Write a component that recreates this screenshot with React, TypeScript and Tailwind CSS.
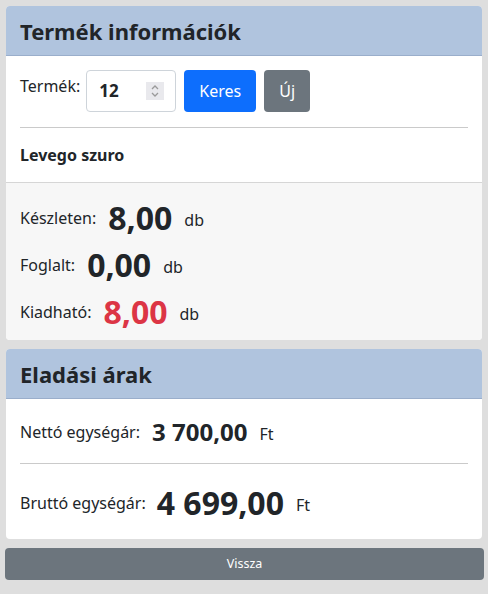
export default function App() {
  return (
    <div
      className="min-h-[594px] bg-[#dedede] pt-[6px] text-[#212529]"
      style={{ fontFamily: '"Noto Sans", "Open Sans", sans-serif' }}
    >
      {/* Termék információk */}
      <div className="mx-[6px] overflow-hidden rounded-[4px] bg-white">
        <div className="flex h-[50px] items-center border-b border-[#9aaecb] bg-[#b0c4de] px-[14px]">
          <h4 className="text-[22px] font-bold leading-none">Termék információk</h4>
        </div>
        <div className="px-[14px]">
          <div className="flex items-start gap-[8px] pt-[14px] pb-[15px]">
            <label className="mt-[4px] mr-[-2px] text-[16px]">Termék:</label>
            <div className="flex h-[42px] w-[90px] items-center justify-between rounded-[4px] border border-[#ced4da] bg-white pl-[12px] pr-[11px]">
              <span className="text-[17px] font-bold">12</span>
              <span className="flex h-[18px] w-[18px] flex-col items-center justify-center bg-[#e9e9ed]">
                <svg width="10" height="14" viewBox="0 0 10 14" fill="none" stroke="#9a9a9a" strokeWidth="1.3">
                  <path d="M2 5 L5 2 L8 5" />
                  <path d="M2 9 L5 12 L8 9" />
                </svg>
              </span>
            </div>
            <button className="h-[42px] w-[72px] rounded-[4px] bg-[#0d6efd] text-[16px] text-white">Keres</button>
            <button className="h-[42px] w-[46px] rounded-[4px] bg-[#6c757d] text-[16px] text-white">Új</button>
          </div>
          <div className="border-t border-[#cacaca]" />
          <div className="flex h-[54px] items-center">
            <span className="text-[16px] font-bold">Levego szuro</span>
          </div>
        </div>
        <div className="flex flex-col border-t border-[#d6d6d6] bg-[#f7f7f7] px-[14px] pt-[11px] pb-[5px]">
          <div className="flex h-[47px] items-center">
            <span className="text-[16px]">Készleten:</span>
            <span className="ml-[12px] text-[32px] font-bold">8,00</span>
            <span className="ml-[12px] mt-[4px] text-[16px]">db</span>
          </div>
          <div className="flex h-[47px] items-center">
            <span className="text-[16px]">Foglalt:</span>
            <span className="ml-[12px] text-[32px] font-bold">0,00</span>
            <span className="ml-[12px] mt-[4px] text-[16px]">db</span>
          </div>
          <div className="flex h-[47px] items-center">
            <span className="text-[16px]">Kiadható:</span>
            <span className="ml-[12px] text-[32px] font-bold text-[#dc3545]">8,00</span>
            <span className="ml-[12px] mt-[4px] text-[16px]">db</span>
          </div>
        </div>
      </div>

      {/* Eladási árak */}
      <div className="mx-[6px] mt-[9px] overflow-hidden rounded-[4px] bg-white">
        <div className="flex h-[50px] items-center border-b border-[#9aaecb] bg-[#b0c4de] px-[14px]">
          <h4 className="text-[22px] font-bold leading-none">Eladási árak</h4>
        </div>
        <div className="px-[14px]">
          <div className="flex h-[64px] items-center pt-[2px]">
            <span className="text-[16px]">Nettó egységár:</span>
            <span className="ml-[12px] text-[24px] font-bold">3 700,00</span>
            <span className="ml-[12px] mt-[4px] text-[16px]">Ft</span>
          </div>
          <div className="border-t border-[#cacaca]" />
          <div className="flex h-[75px] items-center pt-[2px]">
            <span className="text-[16px]">Bruttó egységár:</span>
            <span className="ml-[11px] text-[32px] font-bold">4 699,00</span>
            <span className="ml-[12px] mt-[4px] text-[16px]">Ft</span>
          </div>
        </div>
      </div>

      <button className="mx-[5px] mt-[9px] h-[32px] w-[479px] rounded-[4px] bg-[#6c757d] text-[12.5px] text-white">
        Vissza
      </button>
    </div>
  );
}
